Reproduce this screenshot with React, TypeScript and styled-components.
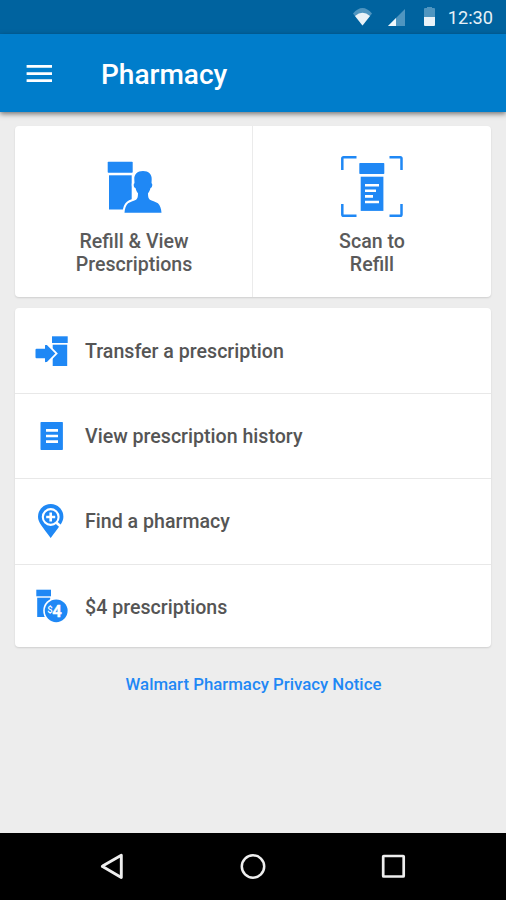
import React from 'react';
import styled, { createGlobalStyle } from 'styled-components';

const BLUE = '#1f88f5';

const GlobalStyle = createGlobalStyle`
  *, *::before, *::after { box-sizing: border-box; }
  body { margin: 0; background: #ededed; font-family: Roboto, "Open Sans", sans-serif; }
  svg { display: block; flex: none; }
`;

const Screen = styled.div`
  display: flex;
  flex-direction: column;
  width: 506px;
  height: 900px;
  background: #ededed;
  overflow: hidden;
`;

const StatusBar = styled.header`
  flex: none;
  display: flex;
  align-items: center;
  justify-content: flex-end;
  height: 34px;
  padding-right: 13px;
  background: #00639f;
`;

const Clock = styled.span`
  margin-left: 12px;
  font-size: 18.2px;
  line-height: 34px;
  padding-top: 1px;
  color: #e6f0f7;
`;

const AppBar = styled.div`
  flex: none;
  display: flex;
  align-items: center;
  height: 78px;
  padding-left: 26px;
  background: #007dcb;
  box-shadow: 0 2px 5px rgba(0, 0, 0, 0.5);
`;

const MenuButton = styled.button`
  display: block;
  width: 27px;
  padding: 0;
  margin-top: 1px;
  border: 0;
  background: none;
`;

const Title = styled.h1`
  margin: 3px 0 0 48px;
  font-size: 28px;
  line-height: 32px;
  font-weight: 500;
  color: #fff;
`;

const Content = styled.main`
  flex: 1;
  display: flex;
  flex-direction: column;
  padding: 14px 15px 0;
`;

const Card = styled.section`
  flex: none;
  width: 476px;
  border-radius: 4px;
  background: #fff;
  box-shadow: 0 1px 2px rgba(0, 0, 0, 0.13);
`;

const TileCard = styled(Card)`
  display: grid;
  grid-template-columns: 237px 1fr;
  height: 171px;
  margin-bottom: 11px;
`;

const Tile = styled.div`
  display: flex;
  flex-direction: column;
  align-items: center;
  padding: 29px 0 0 1px;

  & + & {
    padding-left: 0;
    border-left: 1px solid #ebebeb;
  }
`;

const TileLabel = styled.div`
  margin-top: 12px;
  font-size: 19.6px;
  line-height: 22.5px;
  font-weight: 500;
  text-align: center;
  color: #5a5a5a;
`;

const ListCard = styled(Card)`
  display: grid;
  grid-template-rows: 85px 85px 86px 83px;
  height: 339px;
`;

const RowLabel = styled.span`
  margin: 2px 0 0 17px;
  font-size: 19.6px;
  line-height: 24px;
  font-weight: 500;
  color: #555;
`;

const Row = styled.div`
  display: flex;
  align-items: center;
  padding-left: 19px;

  & + & { border-top: 1px solid #e8e8e8; }
  &:first-child { padding-top: 1px; }
  &:nth-child(3) { padding-bottom: 1px; }
  &:last-child ${RowLabel} { margin-top: 4px; }
`;

const NoticeLink = styled.a`
  align-self: center;
  margin: 26px 0 0 1px;
  font-size: 16.8px;
  line-height: 22px;
  font-weight: 500;
  color: ${BLUE};
`;

const NavBar = styled.nav`
  flex: none;
  display: grid;
  grid-template-columns: repeat(3, 28px);
  column-gap: 112.5px;
  justify-content: center;
  align-items: center;
  height: 67px;
  background: #000;
`;

const StatusIcons = () => (
  <svg width="84" height="24" viewBox="352 5 84 24">
    <path d="M353 13.500 Q362.500 2.500 372 13.500 L362.500 25.500Z" fill="#4f95c0" />
    <path d="M355 16 Q362.500 9.500 370 16 L362.500 25.500Z" fill="#e9f2f8" />
    <path d="M388 26 L405 9 V26Z" fill="#4f95c0" />
    <path d="M388 26 L396 18 V26Z" fill="#f1f7fb" />
    <path d="M424 9 Q424 8 425 8 H427 V7 H432 V8 H434 Q435 8 435 9 V17 H424Z" fill="#4f95c0" />
    <path d="M424 17 H435 V25 Q435 26 434 26 H425 Q424 26 424 25Z" fill="#e9f2f8" />
  </svg>
);

const MenuIcon = () => (
  <svg width="27" height="20" viewBox="0 0 27 20" fill="#fff">
    <path d="M.6 1H26v2.700H.6zM.6 8.200H26v2.700H.6zM.6 15.300H26V18H.6z" />
  </svg>
);

const RefillIcon = () => (
  <svg width="64" height="64" viewBox="0 0 64 64" fill={BLUE}>
    <rect x="5.700" y="6.700" width="25" height="11" rx=".7" />
    <rect x="7" y="20.300" width="22.700" height="34.200" />
    <path
      d="M41 16c-5.700 0-8.900 3.500-8.700 8.300l.2 4c-1.300.2-.9 4.600 1 4.800.5 2.300 1.400 3.900 2.500 5.200 0 3-.3 5.200-1.900 6.400-1.900 1.200-5.500 1.700-8 3.600-2.200 1.700-3.300 5.700-3.600 9.400h37c-.3-3.700-1.400-7.700-3.600-9.400-2.500-1.900-6.100-2.400-8-3.600-1.600-1.200-1.900-3.400-1.900-6.400 1.100-1.300 2-2.900 2.500-5.200 1.900-.2 2.300-4.600 1-4.800l.2-4C49.900 19.500 46.700 16 41 16Z"
      stroke="#fff"
      strokeWidth="4"
      paintOrder="stroke"
    />
  </svg>
);

const ScanIcon = () => (
  <svg width="64" height="64" viewBox="0 0 64 64" fill={BLUE}>
    <path
      d="M2.300 15V3.600q0-1.300 1.300-1.300H16.500M49.500 2.300H60.200q1.300 0 1.300 1.300V15M61.500 49V59.400q0 1.300-1.300 1.300H49.500M16.500 60.700H3.600q-1.300 0-1.300-1.300V49"
      fill="none"
      stroke={BLUE}
      strokeWidth="2.500"
    />
    <rect x="19.300" y="8" width="25" height="11" rx=".7" />
    <rect x="20.700" y="21.700" width="22.700" height="34.200" />
    <path d="M25 30.300h14M25 35.800h11M25 41.400h8M25 47h14" stroke="#fff" strokeWidth="2.600" />
  </svg>
);

const TransferIcon = () => (
  <svg width="34" height="34" viewBox="0 0 34 34" fill={BLUE}>
    <rect x="18" y="2.300" width="15.700" height="6.700" />
    <rect x="18.700" y="10.700" width="14.500" height="21.300" />
    <path
      d="M2.500 14.800H11V11.500Q11 10.500 12 11.100H12.900L21.300 19.500 12.900 28H12Q11 28.500 11 27.500V24.300H2.500Q1.500 24.300 1.500 23.300V15.800Q1.500 14.800 2.500 14.800Z"
      stroke="#fff"
      strokeWidth="3.600"
      paintOrder="stroke"
    />
  </svg>
);

const HistoryIcon = () => (
  <svg width="34" height="34" viewBox="0 0 34 34">
    <rect x="6.500" y="3" width="22.400" height="28" rx=".7" fill={BLUE} />
    <path d="M12 11.300h12M12 17h12M12 22.600h12" stroke="#fff" strokeWidth="2.700" />
  </svg>
);

const PinIcon = () => (
  <svg width="34" height="34" viewBox="0 0 34 34" fill="none">
    <path d="M16.700 0A12.700 12.700 0 0 1 29.400 12.700C29.400 18.500 24.500 23 16.700 34 8.900 23 4 18.500 4 12.700A12.700 12.700 0 0 1 16.700 0Z" fill={BLUE} />
    <circle cx="16.700" cy="13" r="7.900" stroke="#fff" strokeWidth="2.100" />
    <path d="m22 18.300 5 4.500" stroke="#fff" strokeWidth="2.800" />
    <path d="M12.200 13h9M16.700 8.500v9" stroke="#fff" strokeWidth="2.600" />
  </svg>
);

const FourDollarIcon = () => (
  <svg width="34" height="34" viewBox="0 0 34 34" fill={BLUE}>
    <rect x="2.300" y=".7" width="14.700" height="6.600" />
    <rect x="3.200" y="8.700" width="13" height="19.300" />
    <circle cx="22.200" cy="21.800" r="13" fill="#fff" />
    <circle cx="22.200" cy="21.800" r="11.400" />
    <text x="13.200" y="24.300" fill="#fff" fontSize="9.500" fontWeight="500">$</text>
    <text x="18.200" y="28" fill="#fff" stroke="#fff" strokeWidth=".4" fontSize="16.500" fontWeight="700">4</text>
  </svg>
);

const BackIcon = () => (
  <svg width="28" height="28" viewBox="0 0 28 28">
    <path d="M3.600 13 22.300 2.300V24.500L3.600 13.600Q3 13.300 3.600 13Z" fill="none" stroke="#eee" strokeWidth="2.900" strokeLinejoin="round" />
  </svg>
);

const HomeIcon = () => (
  <svg width="28" height="28" viewBox="0 0 28 28">
    <circle cx="14" cy="13.500" r="11.200" fill="none" stroke="#eee" strokeWidth="2.500" />
  </svg>
);

const RecentIcon = () => (
  <svg width="28" height="28" viewBox="0 0 28 28">
    <rect x="3.200" y="3" width="20.500" height="20.500" rx=".5" fill="none" stroke="#eee" strokeWidth="2.700" />
  </svg>
);

const rows = [
  { label: 'Transfer a prescription', Icon: TransferIcon },
  { label: 'View prescription history', Icon: HistoryIcon },
  { label: 'Find a pharmacy', Icon: PinIcon },
  { label: '$4 prescriptions', Icon: FourDollarIcon },
];

export default function App() {
  return (
    <Screen>
      <GlobalStyle />
      <StatusBar>
        <StatusIcons />
        <Clock>12:30</Clock>
      </StatusBar>
      <AppBar>
        <MenuButton aria-label="Menu"><MenuIcon /></MenuButton>
        <Title>Pharmacy</Title>
      </AppBar>
      <Content>
        <TileCard>
          <Tile>
            <RefillIcon />
            <TileLabel>Refill &amp; View<br />Prescriptions</TileLabel>
          </Tile>
          <Tile>
            <ScanIcon />
            <TileLabel>Scan to<br />Refill</TileLabel>
          </Tile>
        </TileCard>
        <ListCard>
          {rows.map(({ label, Icon }) => (
            <Row key={label}>
              <Icon />
              <RowLabel>{label}</RowLabel>
            </Row>
          ))}
        </ListCard>
        <NoticeLink>Walmart Pharmacy Privacy Notice</NoticeLink>
      </Content>
      <NavBar>
        <BackIcon />
        <HomeIcon />
        <RecentIcon />
      </NavBar>
    </Screen>
  );
}
